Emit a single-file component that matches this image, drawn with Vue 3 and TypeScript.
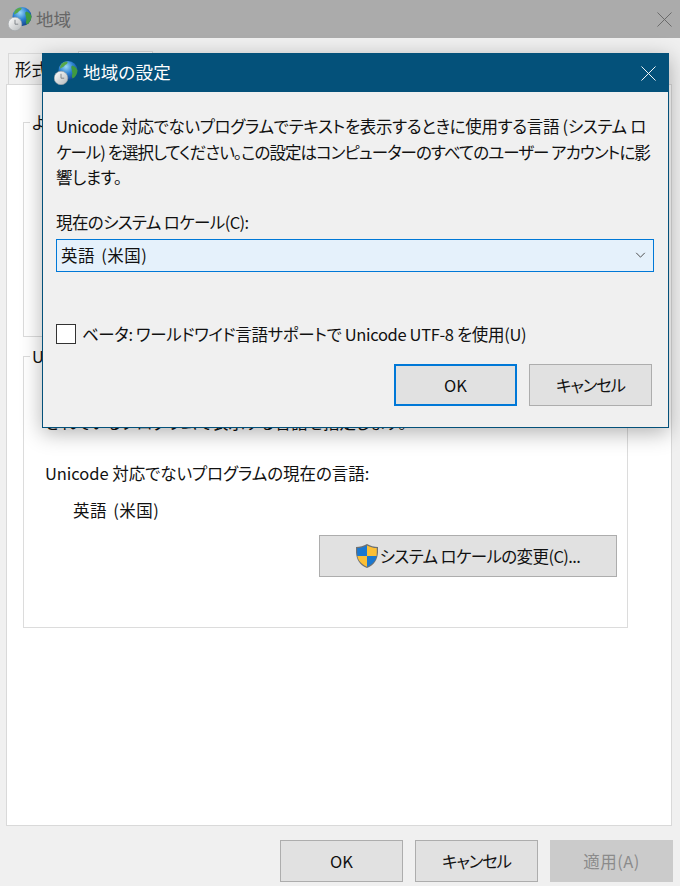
<script setup lang="ts">
const sysLocale: string = '英語 (米国)'
</script>

<template>
  <div class="window">
    <header class="titlebar">
      <svg class="globe" viewBox="0 0 24 24" aria-hidden="true">
        <defs>
          <radialGradient id="g1" cx="40%" cy="30%" r="75%">
            <stop offset="0" stop-color="#9ad8f6" />
            <stop offset="0.5" stop-color="#2a7fd0" />
            <stop offset="1" stop-color="#123f86" />
          </radialGradient>
          <linearGradient id="c1" x1="0" y1="0" x2="1" y2="1">
            <stop offset="0" stop-color="#ffffff" />
            <stop offset="1" stop-color="#b4b8ba" />
          </linearGradient>
        </defs>
        <circle cx="14" cy="9.500" r="9.500" fill="url(#g1)" />
        <path d="M8.500 2c1.500-1 3.500-1.500 5-1.300.5 1.300-.6 2.400-2 3-1 .5-1.300 1.800-2.400 2.400-1 .5-2.300 1-3.100 1.400C6 5.400 7 3.200 8.500 2z" fill="#58a848" />
        <path d="M18.500 4.500c2 .8 4.500 2.500 5 5-.2 3.500-2 6.600-4.800 8-1.100-1.300-1-3-.3-4.400.5-1.100-.7-2-.5-3.400.1-1.700-.8-2.300-.6-4.300z" fill="#3f9a40" />
        <circle cx="7" cy="17" r="6.800" fill="url(#c1)" stroke="#a0a5a8" stroke-width=".6" />
        <path d="M7 12.800v4.400h3.200" fill="none" stroke="#7b8084" stroke-width=".9" />
      </svg>
      <span class="title-text">地域</span>
      <svg class="close" viewBox="0 0 16 16" aria-hidden="true"><path d="M.5.500l15 15M15.500.500l-15 15" /></svg>
    </header>

    <div class="tabs">
      <div class="tab">形式</div>
      <div class="tab tab-active">管理</div>
    </div>

    <div class="panel">
      <fieldset class="group group-first">
        <legend>ようこそ画面と新しいユーザー アカウント</legend>
      </fieldset>
      <fieldset class="group group-second">
        <legend>Unicode 対応でないプログラムの言語</legend>
        <p class="hidden-line">されているプログラムで表示する言語を指定します。</p>
        <p class="cur-label">Unicode 対応でないプログラムの現在の言語:</p>
        <p class="cur-value locale">{{ sysLocale }}</p>
        <div class="shield-row">
          <button class="btn shield-btn" type="button">
            <svg class="shield" viewBox="2 1 20 24" preserveAspectRatio="none" aria-hidden="true">
              <path d="M12 1C9 3 5.500 4 2 4c-.5 9 1 17 10 21 9-4 10.500-12 10-21-3.500 0-7-1-10-3z" fill="#6e7173" />
              <path d="M12 2.500v10.500H3.300C3 9.900 3 7.500 3.200 5.100c3.100-.1 6.100-1 8.800-2.600z" fill="#1b78d0" />
              <path d="M12 2.500c2.700 1.600 5.700 2.500 8.800 2.600.2 2.400.2 4.800-.1 7.900H12z" fill="#fbbf36" />
              <path d="M3.300 13H12v10.700C6.500 21 4 17.500 3.300 13z" fill="#fbbf36" />
              <path d="M12 13h8.700c-.7 4.500-3.200 8-8.700 10.700z" fill="#1b78d0" />
            </svg>
            <span class="tight">システム ロケールの変更(C)...</span>
          </button>
        </div>
      </fieldset>
    </div>

    <footer class="footer">
      <button class="btn" type="button">OK</button>
      <button class="btn kana" type="button">キャンセル</button>
      <button class="btn btn-disabled" type="button">適用(A)</button>
    </footer>

    <section class="dialog">
      <header class="dlg-title">
        <svg class="globe" viewBox="0 0 24 24" aria-hidden="true">
          <circle cx="14" cy="9.500" r="9.500" fill="url(#g1)" />
          <path d="M8.500 2c1.500-1 3.500-1.500 5-1.300.5 1.300-.6 2.400-2 3-1 .5-1.300 1.800-2.400 2.400-1 .5-2.300 1-3.100 1.400C6 5.400 7 3.200 8.500 2z" fill="#58a848" />
          <path d="M18.500 4.500c2 .8 4.500 2.500 5 5-.2 3.500-2 6.600-4.800 8-1.100-1.300-1-3-.3-4.400.5-1.100-.7-2-.5-3.400.1-1.700-.8-2.300-.6-4.300z" fill="#3f9a40" />
          <circle cx="7" cy="17" r="6.800" fill="url(#c1)" stroke="#a0a5a8" stroke-width=".6" />
          <path d="M7 12.800v4.400h3.200" fill="none" stroke="#7b8084" stroke-width=".9" />
        </svg>
        <span class="dlg-title-text">地域の設定</span>
        <svg class="close close-light" viewBox="0 0 16 16" aria-hidden="true"><path d="M.5.500l15 15M15.500.500l-15 15" /></svg>
      </header>
      <div class="dlg-body">
        <p class="dlg-desc">Unicode 対応でないプログラムでテキストを表示するときに使用する言語 (システム ロ<span class="desc-mid">ケール) を選択してください。この設定はコンピューターのすべてのユーザー アカウントに影</span>響します。</p>
        <label class="dlg-label tight">現在のシステム ロケール(C):</label>
        <div class="select">
          <span class="locale">{{ sysLocale }}</span>
          <svg class="chev" viewBox="0 0 12 7" aria-hidden="true"><path d="M1 1l5 5 5-5" /></svg>
        </div>
        <div class="check-row">
          <span class="checkbox"></span>
          <span class="check-text">ベータ: ワールドワイド言語サポートで Unicode UTF-8 を使用(U)</span>
        </div>
        <div class="dlg-actions">
          <button class="btn btn-primary" type="button">OK</button>
          <button class="btn kana" type="button">キャンセル</button>
        </div>
      </div>
    </section>
  </div>
</template>

<style>
html, body { margin: 0; padding: 0; }
</style>

<style scoped>
.window {
  position: relative;
  width: 680px;
  height: 886px;
  overflow: hidden;
  background: #f0f0f0;
  font-family: "Noto Sans CJK JP", "Noto Sans", sans-serif;
  font-size: 16.5px;
  font-feature-settings: "palt";
  color: #111;
  display: flex;
  flex-direction: column;
}
.titlebar {
  height: 38px;
  background: #ababab;
  display: flex;
  align-items: center;
  padding: 0 8px;
  flex: none;
}
.globe { width: 24px; height: 24px; flex: none; }
.title-text { margin-left: 4px; font-size: 17.5px; color: #666; padding-bottom: 2px; }
.close { width: 15px; height: 15px; margin-left: auto; flex: none; }
.close path { stroke: #666; stroke-width: 1; fill: none; }
.close-light path { stroke: #fff; }
.tabs {
  display: flex;
  padding: 15px 0 0 8px;
  height: 31px;
  flex: none;
}
.tab {
  width: 70px;
  border: 1px solid #d9d9d9;
  border-bottom: none;
  background: #f0f0f0;
  padding-left: 6px;
  line-height: 30px;
  box-sizing: border-box;
}
.tab-active { background: #fff; width: 75px; margin-top: -2px; }
.panel {
  margin: 0 8px 0 6px;
  height: 742px;
  box-sizing: border-box;
  background: #fff;
  border: 1px solid #d9d9d9;
  padding: 25px 43px 0 16px;
  display: flex;
  flex-direction: column;
  flex: none;
}
.group {
  margin: 0;
  padding: 0 0 0 21px;
  border: 1px solid #dcdcdc;
  min-width: 0;
}
.group legend { padding: 0 2px; margin-left: -15px; line-height: 24px; }
.group-first { height: 227px; box-sizing: border-box; flex: none; }
.group-second { height: 284px; box-sizing: border-box; margin-top: 7px; flex: none; }
.hidden-line { margin: 42px 0 0; line-height: 24px; white-space: nowrap; }
.cur-label { margin: 27px 0 0; line-height: 24px; letter-spacing: -0.05px; }
.cur-value { margin: 13px 0 0 28px; line-height: 24px; }
.locale { letter-spacing: 0.5px; word-spacing: 2px; }
.tight { letter-spacing: -0.6px; }
.shield-row { display: flex; justify-content: flex-end; margin: 13px 10px 0 0; }
.btn {
  width: 123px;
  height: 42px;
  box-sizing: border-box;
  background: #e1e1e1;
  border: 1px solid #adadad;
  font: inherit;
  color: #111;
  padding: 0;
}
.kana { letter-spacing: -1.2px; }
.shield-btn {
  width: 298px;
  display: flex;
  align-items: center;
  justify-content: center;
  gap: 2px;
}
.shield { width: 22px; height: 24px; flex: none; }
.footer {
  display: flex;
  justify-content: flex-end;
  gap: 12px;
  padding: 14px 7px 0 0;
  flex: none;
}
.btn-disabled { background: #cbcbcb; border-color: #cbcbcb; color: #8b8b8b; letter-spacing: 0.5px; }
.dialog {
  position: absolute;
  left: 42px;
  top: 53px;
  width: 627px;
  height: 375px;
  box-sizing: border-box;
  border: 1px solid #04517a;
  background: #f0f0f0;
  box-shadow: 0 5px 20px rgba(0, 0, 0, 0.3);
  display: flex;
  flex-direction: column;
}
.dlg-title {
  height: 38px;
  background: #04517a;
  display: flex;
  align-items: center;
  padding: 0 12px 0 11px;
  flex: none;
}
.dlg-title-text { margin-left: 5px; font-size: 17.5px; color: #fff; padding-bottom: 3px; letter-spacing: 0.2px; }
.dlg-body { padding: 22px 14px 0 13px; display: flex; flex-direction: column; }
.dlg-desc { margin: 0; line-height: 25.5px; letter-spacing: -0.3px; }
.desc-mid { letter-spacing: -0.95px; }
.dlg-label { margin-top: 19px; line-height: 24px; }
.select {
  margin-top: 5px;
  height: 33px;
  box-sizing: border-box;
  background: #e5f1fb;
  border: 1px solid #0078d7;
  display: flex;
  align-items: center;
  justify-content: space-between;
  padding: 0 7px 0 4px;
}
.chev { width: 11px; height: 6px; }
.chev path { fill: none; stroke: #444; stroke-width: 1.1; }
.check-row {
  margin-top: 50px;
  display: flex;
  align-items: center;
  gap: 6px;
  line-height: 24px;
}
.check-text { letter-spacing: -0.35px; }
.checkbox {
  width: 18px;
  height: 18px;
  background: #fff;
  border: 1px solid #333;
  flex: none;
}
.dlg-actions {
  display: flex;
  justify-content: flex-end;
  gap: 12px;
  margin-top: 18px;
  margin-right: 2px;
}
.btn-primary { border: 2px solid #0078d7; }
</style>
